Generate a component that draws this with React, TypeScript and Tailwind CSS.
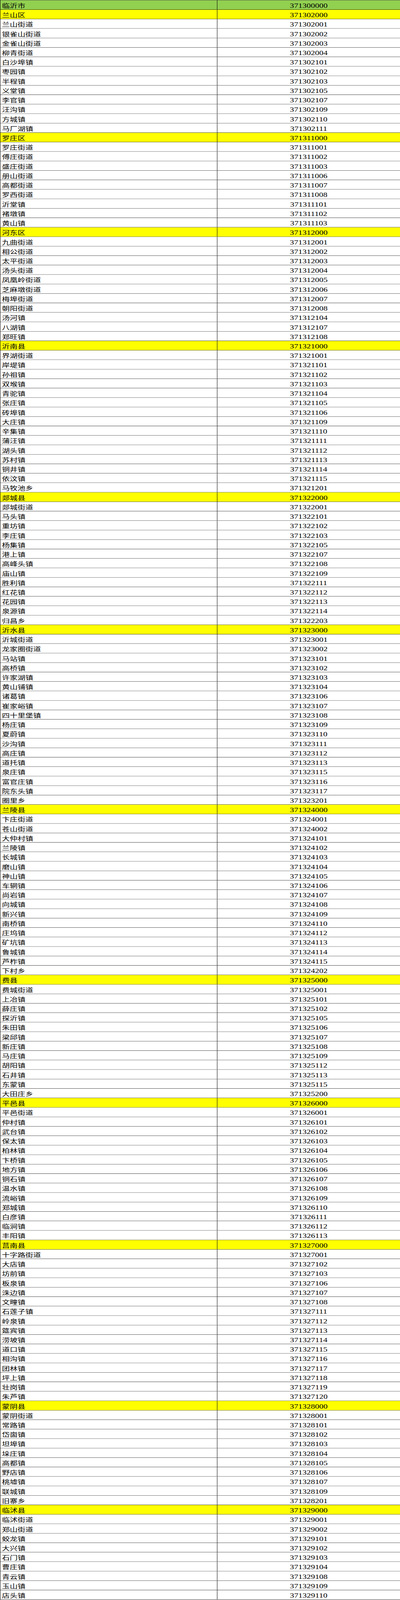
const rows: [string, string][] = [
  ['临沂市', '371300000'],
  ['兰山区', '371302000'],
  ['兰山街道', '371302001'],
  ['银雀山街道', '371302002'],
  ['金雀山街道', '371302003'],
  ['柳青街道', '371302004'],
  ['白沙埠镇', '371302101'],
  ['枣园镇', '371302102'],
  ['半程镇', '371302103'],
  ['义堂镇', '371302105'],
  ['李官镇', '371302107'],
  ['汪沟镇', '371302109'],
  ['方城镇', '371302110'],
  ['马厂湖镇', '371302111'],
  ['罗庄区', '371311000'],
  ['罗庄街道', '371311001'],
  ['傅庄街道', '371311002'],
  ['盛庄街道', '371311003'],
  ['册山街道', '371311006'],
  ['高都街道', '371311007'],
  ['罗西街道', '371311008'],
  ['沂堂镇', '371311101'],
  ['褚墩镇', '371311102'],
  ['黄山镇', '371311103'],
  ['河东区', '371312000'],
  ['九曲街道', '371312001'],
  ['相公街道', '371312002'],
  ['太平街道', '371312003'],
  ['汤头街道', '371312004'],
  ['凤凰岭街道', '371312005'],
  ['芝麻墩街道', '371312006'],
  ['梅埠街道', '371312007'],
  ['朝阳街道', '371312008'],
  ['汤河镇', '371312104'],
  ['八湖镇', '371312107'],
  ['郑旺镇', '371312108'],
  ['沂南县', '371321000'],
  ['界湖街道', '371321001'],
  ['岸堤镇', '371321101'],
  ['孙祖镇', '371321102'],
  ['双堠镇', '371321103'],
  ['青驼镇', '371321104'],
  ['张庄镇', '371321105'],
  ['砖埠镇', '371321106'],
  ['大庄镇', '371321109'],
  ['辛集镇', '371321110'],
  ['蒲汪镇', '371321111'],
  ['湖头镇', '371321112'],
  ['苏村镇', '371321113'],
  ['铜井镇', '371321114'],
  ['依汶镇', '371321115'],
  ['马牧池乡', '371321201'],
  ['郯城县', '371322000'],
  ['郯城街道', '371322001'],
  ['马头镇', '371322101'],
  ['重坊镇', '371322102'],
  ['李庄镇', '371322103'],
  ['杨集镇', '371322105'],
  ['港上镇', '371322107'],
  ['高峰头镇', '371322108'],
  ['庙山镇', '371322109'],
  ['胜利镇', '371322111'],
  ['红花镇', '371322112'],
  ['花园镇', '371322113'],
  ['泉源镇', '371322114'],
  ['归昌乡', '371322203'],
  ['沂水县', '371323000'],
  ['沂城街道', '371323001'],
  ['龙家圈街道', '371323002'],
  ['马站镇', '371323101'],
  ['高桥镇', '371323102'],
  ['许家湖镇', '371323103'],
  ['黄山铺镇', '371323104'],
  ['诸葛镇', '371323106'],
  ['崔家峪镇', '371323107'],
  ['四十里堡镇', '371323108'],
  ['杨庄镇', '371323109'],
  ['夏蔚镇', '371323110'],
  ['沙沟镇', '371323111'],
  ['高庄镇', '371323112'],
  ['道托镇', '371323113'],
  ['泉庄镇', '371323115'],
  ['富官庄镇', '371323116'],
  ['院东头镇', '371323117'],
  ['圈里乡', '371323201'],
  ['兰陵县', '371324000'],
  ['卞庄街道', '371324001'],
  ['苍山街道', '371324002'],
  ['大仲村镇', '371324101'],
  ['兰陵镇', '371324102'],
  ['长城镇', '371324103'],
  ['磨山镇', '371324104'],
  ['神山镇', '371324105'],
  ['车辋镇', '371324106'],
  ['尚岩镇', '371324107'],
  ['向城镇', '371324108'],
  ['新兴镇', '371324109'],
  ['南桥镇', '371324110'],
  ['庄坞镇', '371324112'],
  ['矿坑镇', '371324113'],
  ['鲁城镇', '371324114'],
  ['芦柞镇', '371324115'],
  ['下村乡', '371324202'],
  ['费县', '371325000'],
  ['费城街道', '371325001'],
  ['上冶镇', '371325101'],
  ['薛庄镇', '371325102'],
  ['探沂镇', '371325105'],
  ['朱田镇', '371325106'],
  ['梁邱镇', '371325107'],
  ['新庄镇', '371325108'],
  ['马庄镇', '371325109'],
  ['胡阳镇', '371325112'],
  ['石井镇', '371325113'],
  ['东蒙镇', '371325115'],
  ['大田庄乡', '371325200'],
  ['平邑县', '371326000'],
  ['平邑街道', '371326001'],
  ['仲村镇', '371326101'],
  ['武台镇', '371326102'],
  ['保太镇', '371326103'],
  ['柏林镇', '371326104'],
  ['卞桥镇', '371326105'],
  ['地方镇', '371326106'],
  ['铜石镇', '371326107'],
  ['温水镇', '371326108'],
  ['流峪镇', '371326109'],
  ['郑城镇', '371326110'],
  ['白彦镇', '371326111'],
  ['临涧镇', '371326112'],
  ['丰阳镇', '371326113'],
  ['莒南县', '371327000'],
  ['十字路街道', '371327001'],
  ['大店镇', '371327102'],
  ['坊前镇', '371327103'],
  ['板泉镇', '371327106'],
  ['洙边镇', '371327107'],
  ['文疃镇', '371327108'],
  ['石莲子镇', '371327111'],
  ['岭泉镇', '371327112'],
  ['筵宾镇', '371327113'],
  ['涝坡镇', '371327114'],
  ['道口镇', '371327115'],
  ['相沟镇', '371327116'],
  ['团林镇', '371327117'],
  ['坪上镇', '371327118'],
  ['壮岗镇', '371327119'],
  ['朱芦镇', '371327120'],
  ['蒙阴县', '371328000'],
  ['蒙阴街道', '371328001'],
  ['常路镇', '371328101'],
  ['岱崮镇', '371328102'],
  ['坦埠镇', '371328103'],
  ['垛庄镇', '371328104'],
  ['高都镇', '371328105'],
  ['野店镇', '371328106'],
  ['桃墟镇', '371328107'],
  ['联城镇', '371328109'],
  ['旧寨乡', '371328201'],
  ['临沭县', '371329000'],
  ['临沭街道', '371329001'],
  ['郑山街道', '371329002'],
  ['蛟龙镇', '371329101'],
  ['大兴镇', '371329102'],
  ['石门镇', '371329103'],
  ['曹庄镇', '371329104'],
  ['青云镇', '371329108'],
  ['玉山镇', '371329109'],
  ['店头镇', '371329110'],
]

export default function App() {
  return (
    <div className="h-[4096px] overflow-hidden bg-white">
      <div
        className="w-[1025px] origin-top scale-y-[0.734182] bg-white text-black border-t border-l border-black"
        style={{ fontFamily: '"Liberation Serif", "Noto Sans CJK SC", serif' }}
      >
        {rows.map(([name, code], i) => {
          // 市级绿色，区县级黄色
          const bg = i === 0 ? 'bg-[#92d050]' : code.endsWith('000') ? 'bg-[#ffff00]' : 'bg-white'
          return (
            <div key={code} className={`grid grid-cols-[556px_1fr] h-[33px] border-b border-black ${bg}`}>
              <div className="border-r border-black pl-[4px] pt-[6px] text-[20px] leading-[26px] whitespace-nowrap">
                {name}
              </div>
              <div className="text-center pt-[6px] text-[21.5px] leading-[26px]">{code}</div>
            </div>
          )
        })}
      </div>
    </div>
  )
}
